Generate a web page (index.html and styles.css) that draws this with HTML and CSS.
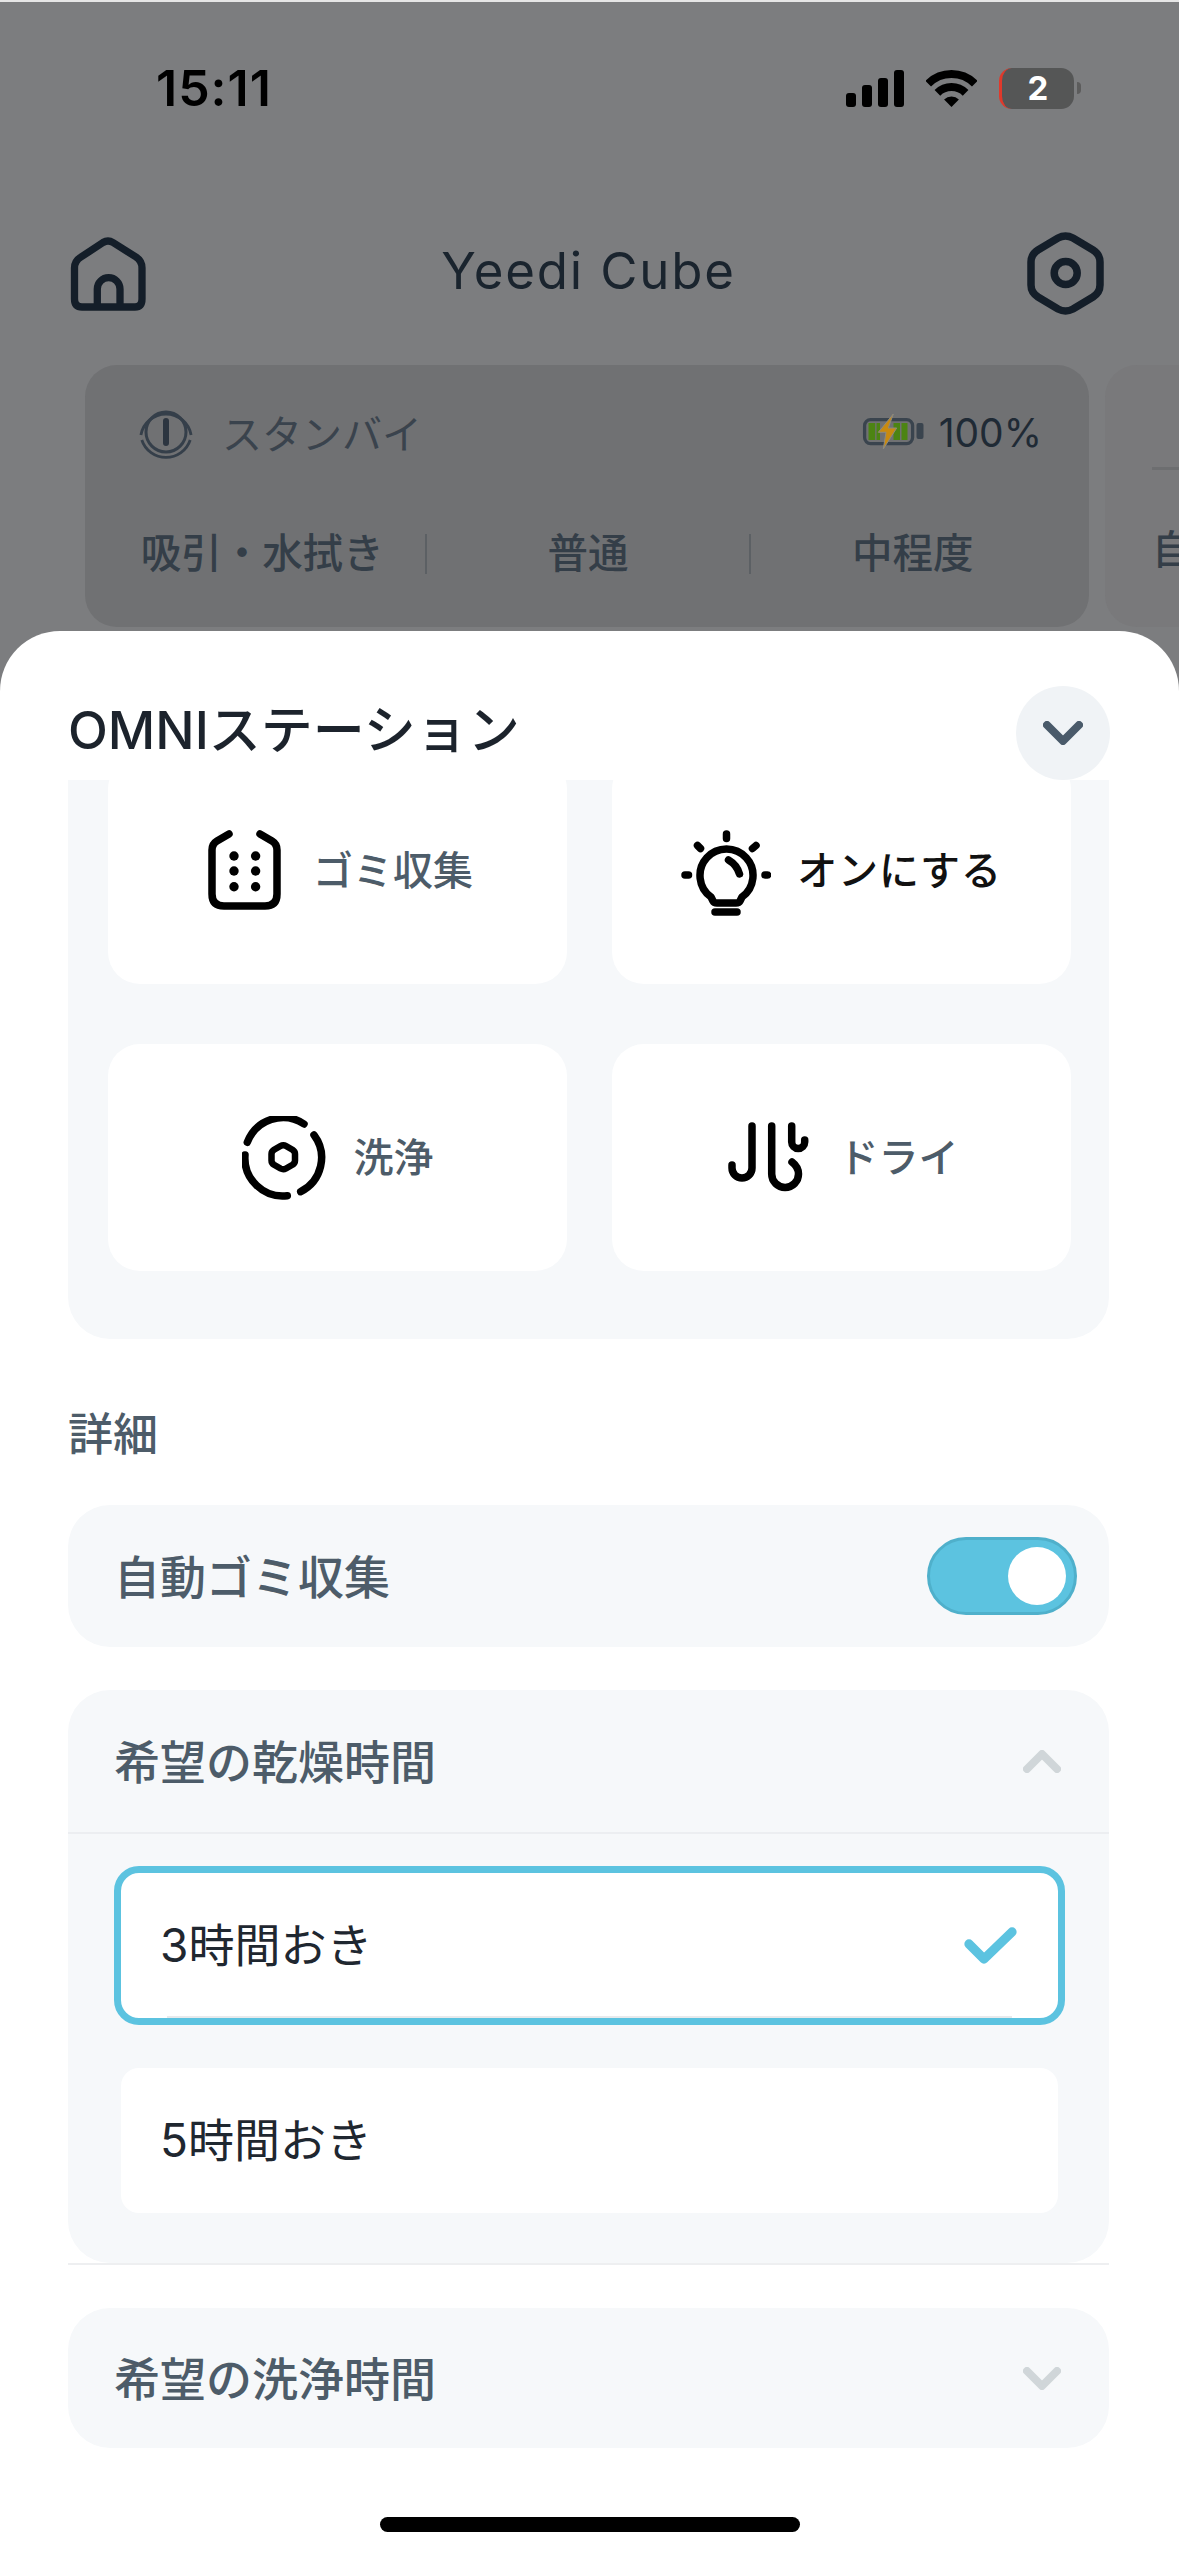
FILE: index.html
```html
<!DOCTYPE html>
<html lang="ja">
<head>
<meta charset="utf-8">
<title>Yeedi Cube</title>
<link rel="stylesheet" href="styles.css">
</head>
<body>
<div class="screen">
  <div class="status">
    <span class="time">15:11</span>
    <div class="status-icons">
      <svg class="signal" viewBox="0 0 58 37"><rect x="0" y="23" width="10" height="14" rx="3"/><rect x="16" y="15" width="10" height="22" rx="3"/><rect x="32" y="8" width="10" height="29" rx="3"/><rect x="48" y="0" width="10" height="37" rx="3"/></svg>
      <svg class="wifi" viewBox="0 0 51 37"><path d="M2.2 13.7A33 33 0 0 1 48.8 13.7M11.4 22.9A20 20 0 0 1 39.6 22.9" fill="none" stroke="#000" stroke-width="8"/><path d="M25.5 37L18.1 29.6A10.4 10.4 0 0 1 32.9 29.6Z"/></svg>
      <div class="batt"><div class="batt-body">2</div><div class="batt-nub"></div></div>
    </div>
  </div>
  <header class="nav">
    <svg class="home" viewBox="0 0 76 75"><path d="M33 6.5L11 21Q4.5 25 4.5 32V63Q4.5 71 12 71H65Q72 71 72 63V32Q72 25 66 21L43 6.5Q38 3.5 33 6.5ZM27.3 71V53A11.3 11.3 0 0 1 50 53V71"/></svg>
    <h1 class="nav-title">Yeedi Cube</h1>
    <svg class="gear" viewBox="0 0 77 83"><path d="M31 6Q38.5 2 46 6L66 18Q73 22.5 73 30V53Q73 60.5 66 65L46 77Q38.5 81 31 77L11 65Q4 60.5 4 53V30Q4 22.5 11 18Z"/><circle cx="38.7" cy="41" r="11.5"/></svg>
  </header>
  <div class="cards">
    <section class="robot">
      <div class="robot-top">
        <div class="state">
          <svg class="power" viewBox="0 0 54 54"><path d="M1.9 30A25.5 25.5 0 0 1 52.1 30M2.8 35A25.5 25.5 0 0 0 51.2 35" fill="none" stroke="#353f4a" stroke-width="2.8"/><circle cx="27" cy="27" r="20" fill="none" stroke="#353f4a" stroke-width="3"/><rect x="24" y="13" width="6" height="28" rx="3" fill="#2c3540"/></svg>
          <span>スタンバイ</span>
        </div>
        <div class="level">
          <svg class="charge" viewBox="0 0 62 38"><rect x="2.6" y="6.6" width="48" height="24" rx="6" fill="none" stroke="#3a444e" stroke-width="3.3"/><rect x="54.5" y="10" width="7" height="16" rx="2" fill="#3a444e"/><g fill="#4c8413"><rect x="6.5" y="10" width="6.7" height="17"/><rect x="14.5" y="10" width="3.5" height="17"/><rect x="31.5" y="10" width="6.5" height="17"/><rect x="39.5" y="10" width="6" height="17"/></g><path d="M31.3 1L16.3 19.3H24L21.3 36L34.7 15H26.3Z" fill="#c98a10" stroke="#8d8a80"/></svg>
          <span>100%</span>
        </div>
      </div>
      <div class="modes">
        <div class="mode">吸引・水拭き</div>
        <div class="mode mode-sep">普通</div>
        <div class="mode mode-sep">中程度</div>
      </div>
    </section>
    <section class="robot-next">
      <div class="next-line"></div>
      <div class="next-text">自動</div>
    </section>
  </div>

  <div class="sheet">
    <div class="sheet-head">
      <h2 class="sheet-title">OMNIステーション</h2>
      <button class="close">
        <svg class="close-icon" viewBox="0 0 40 24"><path d="M4 4L20 20L36 4"/></svg>
      </button>
    </div>
    <div class="sheet-scroll">
      <div class="actions">
        <div class="action gap-dust">
          <svg class="ic ic-dust" viewBox="0 0 73 80"><path d="M21 4L9 11Q4 14 4 20V64Q4 76 16 76H57Q69 76 69 64V20Q69 14 64 11L52 4"/><g class="dots"><circle cx="26" cy="26" r="4.7"/><circle cx="47.6" cy="26" r="4.7"/><circle cx="26" cy="41" r="4.7"/><circle cx="47.6" cy="41" r="4.7"/><circle cx="26" cy="56.7" r="4.7"/><circle cx="47.6" cy="56.7" r="4.7"/></g></svg>
          <span class="action-label">ゴミ収集</span>
        </div>
        <div class="action gap-bulb">
          <svg class="ic ic-bulb" viewBox="0 0 90 86"><path d="M30 67A26.5 26.5 0 1 1 61 67L59 71Q58 73 55 73H36Q33 73 32 71ZM47.5 30Q56 35 58.5 44M45.5 4V8.5M16.5 15.5L19.5 18.5M71.5 18.5L75 15.5M4 45H7.5M84 45H86.5M34 82H56"/></svg>
          <span class="action-label action-on">オンにする</span>
        </div>
        <div class="action gap-wash">
          <svg class="ic ic-wash" viewBox="0 0 84 84"><path d="M5.3 26.3A38 38 0 0 1 62 8M72 19A38 38 0 0 1 58.7 75.7M45.3 79.7A38 38 0 0 1 3 39"/><path class="hex" d="M38.5 30Q41.3 28.4 44 30L50.5 33.8Q53 35.4 53 38V44.5Q53 47.2 50.5 48.8L44 52.5Q41.3 54 38.5 52.5L32 48.8Q29.5 47.2 29.5 44.5V38Q29.5 35.4 32 33.8Z"/></svg>
          <span class="action-label">洗浄</span>
        </div>
        <div class="action gap-dry">
          <svg class="ic ic-dry" viewBox="0 0 81 72"><path d="M24 4V46A10 10 0 0 1 4 46V43M43.7 4V52A13.4 13.4 0 0 0 70.5 52Q70.5 45 64 40M63.7 4V20A6.5 6.5 0 0 0 76.7 20V18"/></svg>
          <span class="action-label">ドライ</span>
        </div>
      </div>

      <div class="section-label">詳細</div>

      <div class="row row-auto">
        <span class="row-text">自動ゴミ収集</span>
        <div class="toggle"><div class="knob"></div></div>
      </div>

      <div class="acc-wrap">
        <div class="acc">
          <div class="row acc-head">
            <span class="row-text">希望の乾燥時間</span>
            <svg class="chev" viewBox="0 0 38 23"><path d="M4 19L19 4L34 19"/></svg>
          </div>
          <div class="acc-body">
            <div class="opt opt-on">
              <span class="opt-text">3時間おき</span>
              <svg class="check" viewBox="0 0 53 37"><path d="M5 17L20 32L48 5"/></svg>
            </div>
            <div class="opt"><span class="opt-text">5時間おき</span></div>
          </div>
        </div>
      </div>

      <div class="row acc-closed">
        <span class="row-text">希望の洗浄時間</span>
        <svg class="chev" viewBox="0 0 38 23"><path d="M4 4L19 19L34 4"/></svg>
      </div>
    </div>
    <div class="home-bar"></div>
  </div>
</div>
</body>
</html>
```
FILE: styles.css
```css
* { box-sizing: border-box; }
html, body { margin: 0; padding: 0; }
body { background: #fff; font-family: Inter, "Noto Sans CJK JP", sans-serif; }
h1, h2 { margin: 0; font-weight: inherit; font-size: inherit; }

.screen {
  position: relative;
  width: 1179px;
  height: 2556px;
  overflow: hidden;
  background: #7c7d7f;
  border-top: 2px solid #e6e6e6;
}

/* status bar */
.status {
  height: 172px;
  display: flex;
  align-items: center;
  justify-content: space-between;
  padding: 0 98px 0 156px;
}
.time { font-size: 50px; font-weight: 600; letter-spacing: 1px; color: #000; }
.status-icons { display: flex; align-items: center; gap: 22px; }
.signal { width: 58px; height: 37px; display: block; }
.wifi { width: 51px; height: 37px; display: block; }
.batt { display: flex; align-items: center; gap: 3px; }
.batt-body {
  width: 75px; height: 41px;
  background: #555656;
  border-left: 3px solid #e0392b;
  border-radius: 13px;
  color: #fff;
  font-size: 33px; font-weight: 700;
  display: flex; align-items: center; justify-content: center;
}
.batt-nub { width: 4px; height: 12px; background: #5c5c5c; border-radius: 0 6px 6px 0; }

/* nav */
.nav {
  margin-top: 7px;
  height: 184px;
  display: flex;
  align-items: center;
  justify-content: space-between;
  padding: 0 75px 0 70px;
}
.home { width: 76px; height: 75px; fill: none; stroke: #141e29; stroke-width: 7.3; }
.gear { width: 77px; height: 83px; fill: none; stroke: #141e29; stroke-width: 7.5; }
.nav-title { font-size: 51px; color: #1a242e; letter-spacing: 1.8px; font-weight: 400; padding-bottom: 5px; margin-left: 4px; }

/* cards behind the sheet */
.cards { display: flex; gap: 16px; padding-left: 85px; }
.robot {
  flex: none;
  width: 1004px; height: 262px;
  background: #707173;
  border-radius: 32px;
  padding: 0 15px;
}
.robot-top {
  height: 134px;
  display: flex;
  align-items: center;
  justify-content: space-between;
  padding: 0 32px 0 39px;
}
.state { display: flex; align-items: center; gap: 29px; font-size: 40px; color: #3a434d; }
.power { width: 54px; height: 54px; display: block; }
.level { display: flex; align-items: center; gap: 15px; font-size: 39px; color: #1f2a35; }
.charge { width: 62px; height: 38px; display: block; }
.modes { margin-top: 35px; display: grid; grid-template-columns: repeat(3, 1fr); }
.mode {
  height: 40px; line-height: 40px;
  text-align: center;
  font-size: 40.5px; font-weight: 500;
  color: #343e48;
  white-space: nowrap;
}
.mode-sep { border-left: 2px solid #5c6064; }

.robot-next {
  flex: none;
  width: 300px; height: 262px;
  background: #79797b;
  border-radius: 32px;
  padding: 102px 0 0 47px;
}
.next-line { height: 3px; background: #6d6e70; }
.next-text { margin-top: 48px; font-size: 40px; font-weight: 500; color: #343e48; white-space: nowrap; }

/* sheet */
.sheet {
  position: absolute;
  left: 0; right: 0;
  top: 629px; bottom: 0;
  background: #fff;
  border-radius: 60px 60px 0 0;
  display: flex;
  flex-direction: column;
}
.sheet-head {
  flex: none;
  height: 149px;
  padding: 55px 69px 0 68px;
  display: flex;
  align-items: center;
  justify-content: space-between;
}
.sheet-title { font-size: 52px; font-weight: 500; color: #1c232c; margin-bottom: 13px; }
.close {
  width: 94px; height: 94px;
  border: 0; padding: 0;
  border-radius: 50%;
  background: #f0f3f6;
  display: flex; align-items: center; justify-content: center;
}
.close-icon { width: 40px; height: 24px; fill: none; stroke: #4a5a6a; stroke-width: 8; stroke-linecap: round; stroke-linejoin: round; }

.sheet-scroll { flex: 1; min-height: 0; overflow: hidden; padding: 0 70px 0 68px; }

.actions {
  margin-top: -63px;
  padding: 40px 38px 68px 40px;
  background: #f6f8fa;
  border-radius: 42px;
  display: grid;
  grid-template-columns: 459px 459px;
  column-gap: 45px;
  row-gap: 60px;
}
.action {
  height: 227px;
  background: #fff;
  border-radius: 32px;
  display: flex;
  align-items: center;
  justify-content: center;
}
.gap-dust { gap: 32px; padding-left: 6px; }
.gap-bulb { gap: 26px; }
.gap-wash { gap: 28px; }
.gap-dry { gap: 30px; padding-left: 3px; }
.action:nth-child(-n+2) { align-items: flex-start; }
.action:nth-child(-n+2) > .ic { margin-top: 73px; }
.action:nth-child(-n+2) > .action-label { margin-top: 90px; }
.action-label { font-size: 40px; font-weight: 500; color: #4d5c69; line-height: 1.2; }
.action-on { color: #111; letter-spacing: 0.8px; }
.ic { display: block; fill: none; stroke: #000; stroke-width: 7.5; stroke-linecap: round; stroke-linejoin: round; }
.ic-dust { width: 73px; height: 80px; }
.dots { fill: #000; stroke: none; }
.ic-bulb { width: 90px; height: 86px; }
.ic-wash { width: 84px; height: 84px; }
.hex { stroke-width: 6.5; }
.ic-dry { width: 81px; height: 72px; }

.section-label {
  margin-top: 73px;
  height: 45px; line-height: 45px;
  font-size: 45px; font-weight: 500;
  color: #4d5c69;
}

.row {
  display: flex;
  align-items: center;
  justify-content: space-between;
  background: #f6f8fa;
}
.row-text { font-size: 46px; font-weight: 500; color: #4d5c69; padding-bottom: 5px; }
.row-auto {
  margin-top: 48px;
  height: 142px;
  border-radius: 42px;
  padding: 0 32px 0 46px;
}
.toggle {
  width: 150px; height: 78px;
  background: #5cc3e0;
  border: 3px solid #4fb0cb;
  border-radius: 39px;
  padding-right: 8px;
  display: flex; align-items: center; justify-content: flex-end;
}
.knob { width: 58px; height: 58px; border-radius: 50%; background: #fff; }

.acc-wrap { margin-top: 43px; border-bottom: 2px solid #eeeff1; }
.acc { background: #f6f8fa; border-radius: 42px; }
.acc-head {
  height: 144px;
  padding: 0 48px 0 46px;
  background: transparent;
  border-bottom: 2px solid #eceef1;
}
.acc-body { padding: 32px 44px 43px 46px; display: flex; flex-direction: column; gap: 36px; }
.opt {
  position: relative;
  height: 159px;
  padding: 0 41px 0 39px;
  display: flex;
  align-items: center;
  justify-content: space-between;
  background: #fff;
  background-clip: padding-box;
  border: 7px solid transparent;
  border-radius: 25px;
  font-size: 46px;
  color: #1f2730;
}
.opt-text { padding-bottom: 8px; }
.opt-on { border-color: #5cc3e0; }
.opt-on::after {
  content: "";
  position: absolute;
  left: 46px; right: 46px; bottom: 0;
  height: 2px;
  background: #e8eaec;
}
.check { width: 53px; height: 37px; fill: none; stroke: #5cc3e0; stroke-width: 9.3; stroke-linecap: round; stroke-linejoin: round; }
.chev { width: 38px; height: 23px; fill: none; stroke: #d0d6d9; stroke-width: 8; stroke-linecap: round; stroke-linejoin: round; }

.acc-closed {
  margin-top: 43px;
  height: 140px;
  border-radius: 42px;
  padding: 0 48px 0 46px;
}

.home-bar {
  position: absolute;
  left: 380px; bottom: 24px;
  width: 420px; height: 15px;
  background: #000;
  border-radius: 8px;
}
```
